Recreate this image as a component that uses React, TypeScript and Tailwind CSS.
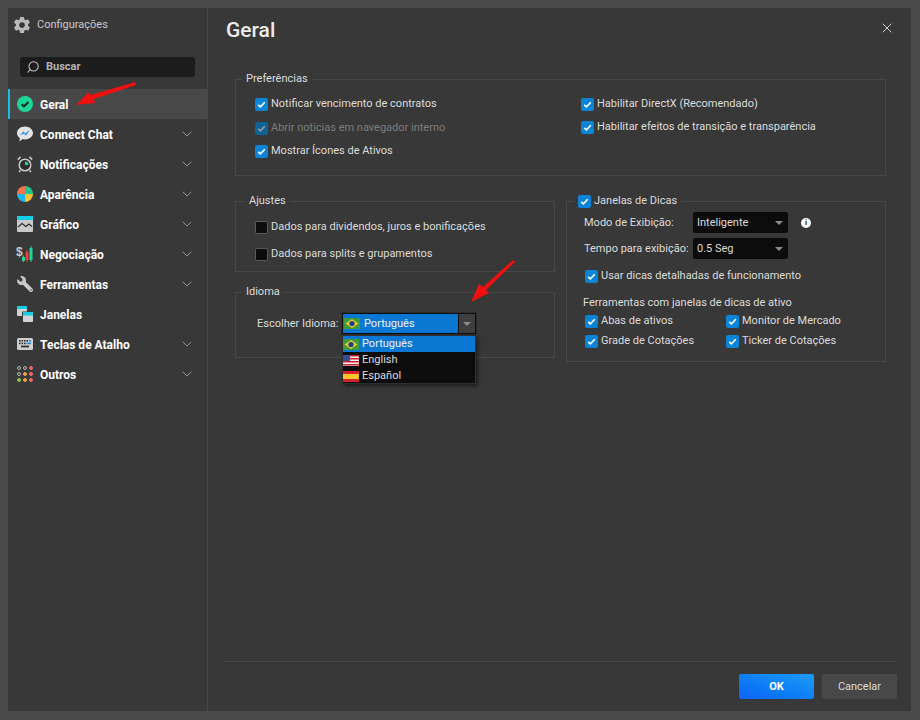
import { ReactNode } from 'react';
import { ChevronDown, X, Search } from 'lucide-react';
import { FaWrench } from 'react-icons/fa';
import { IoSettingsSharp } from 'react-icons/io5';

const FONT = "font-['Roboto','Noto_Sans',sans-serif]";

function Check({ checked = true, dim = false }: { checked?: boolean; dim?: boolean }) {
  if (!checked) {
    return <span className="w-[13px] h-[13px] shrink-0 rounded-[2px] bg-[#0c0c0c] border border-[#5a5a5a]" />;
  }
  return (
    <span className={`w-[13px] h-[13px] shrink-0 rounded-[2px] flex items-center justify-center ${dim ? 'bg-[#0f6296]' : 'bg-[#0a84d6]'}`}>
      <svg width="9" height="9" viewBox="0 0 9 9" fill="none">
        <path d="M1.2 4.8 L3.4 6.9 L7.8 2.2" stroke={dim ? '#9a9a9a' : '#fff'} strokeWidth="1.6" />
      </svg>
    </span>
  );
}

function CheckRow({ label, checked = true, dim = false }: { label: string; checked?: boolean; dim?: boolean }) {
  return (
    <div className="flex items-center gap-[3px] h-[14px]">
      <Check checked={checked} dim={dim} />
      <span className={`whitespace-nowrap ${dim ? 'text-[#7c7c7c]' : 'text-[#dcdcdc]'}`}>{label}</span>
    </div>
  );
}

function Group({ title, titleLeft = 'left-[6px]', className, children }: { title: ReactNode; titleLeft?: string; className: string; children: ReactNode }) {
  return (
    <div className={`relative border border-[#484848] ${className}`}>
      <div className={`absolute -top-[8px] ${titleLeft} px-1 bg-[#383838] h-[14px] flex items-center text-[#dcdcdc] whitespace-nowrap`}>{title}</div>
      {children}
    </div>
  );
}

function Select({ label, width = 'w-[95px]' }: { label: string; width?: string }) {
  return (
    <div className={`${width} h-[21px] bg-[#0c0c0c] rounded-[2px] flex items-center justify-between pl-[4px] pr-[5px] text-[#dcdcdc]`}>
      <span>{label}</span>
      <span className="w-0 h-0 border-x-[4px] border-x-transparent border-t-[4px] border-t-[#8c8c8c]" />
    </div>
  );
}

const BrazilFlag = () => (
  <svg width="16" height="11" viewBox="0 0 16 11" className="shrink-0">
    <rect width="16" height="11" fill="#3f9a3a" />
    <path d="M8 1 L14.5 5.5 L8 10 L1.5 5.5 Z" fill="#e8c92c" />
    <circle cx="8" cy="5.5" r="2.6" fill="#1d3f8f" />
  </svg>
);

const UsFlag = () => (
  <svg width="16" height="11" viewBox="0 0 16 11" className="shrink-0">
    <rect width="16" height="11" fill="#f2f2f2" />
    <rect y="0" width="16" height="1.5" fill="#c8202c" />
    <rect y="3" width="16" height="1.5" fill="#c8202c" />
    <rect y="6" width="16" height="1.5" fill="#c8202c" />
    <rect y="9" width="16" height="1.5" fill="#c8202c" />
    <rect width="7" height="6" fill="#3c4a9a" />
  </svg>
);

const SpainFlag = () => (
  <svg width="16" height="11" viewBox="0 0 16 11" className="shrink-0">
    <rect width="16" height="11" fill="#d4202a" />
    <rect y="3" width="16" height="5" fill="#f6c52c" />
  </svg>
);

const GeralIcon = () => (
  <svg width="16" height="16" viewBox="0 0 16 16">
    <circle cx="8" cy="8" r="8" fill="#1fd69a" />
    <path d="M4.6 8.2 L7 10.4 L11.4 6" stroke="#10231d" strokeWidth="1.9" fill="none" />
  </svg>
);

const ChatIcon = () => (
  <svg width="16" height="16" viewBox="0 0 16 16">
    <path d="M8 .5 C12.4.5 16 3.4 16 7 C16 10.6 12.4 13.4 8 13.4 C7.2 13.4 6.4 13.3 5.7 13.1 L2.6 15.4 L2.8 11.9 C1 10.7 0 9 0 7 C0 3.4 3.6.5 8 .5 Z" fill="#e4e4e4" />
    <path d="M2.8 9.6 L6.4 5.4 L8.2 7.6 L12.8 4 L9 9.4 L7 7.6 Z" fill="#1f8df0" />
  </svg>
);

const AlarmIcon = () => (
  <svg width="16" height="17" viewBox="0 0 16 17" fill="none">
    <circle cx="8" cy="9" r="5.8" stroke="#c9c9c9" strokeWidth="1.5" fill="#2c2c2c" />
    <path d="M8 9 V5.6 A3.4 3.4 0 0 1 11.4 9 Z" fill="#1fd69a" />
    <path d="M.8 3.6 L3.6 .9 M15.2 3.6 L12.4 .9 M3.4 14.2 L2 16 M12.6 14.2 L14 16" stroke="#c9c9c9" strokeWidth="1.5" />
  </svg>
);

const PaletteIcon = () => (
  <svg width="16" height="16" viewBox="0 0 16 16">
    <path d="M8 8 V0 A8 8 0 0 0 0 8 Z" fill="#f2734c" />
    <path d="M8 8 V0 A8 8 0 0 1 16 8 Z" fill="#1fc98e" />
    <path d="M8 8 H0 A8 8 0 0 0 8 16 Z" fill="#1fb6e6" />
    <path d="M8 8 H16 A8 8 0 0 1 8 16 Z" fill="#f5c033" />
  </svg>
);

const ChartIcon = () => (
  <svg width="16" height="16" viewBox="0 0 16 16">
    <rect width="16" height="16" rx="1" fill="#c9c9c9" />
    <path d="M1 0 H15 A1 1 0 0 1 16 1 V4 H0 V1 A1 1 0 0 1 1 0 Z" fill="#12cde6" />
    <path d="M1 11 L5 7.5 L9 10.5 L12 8 L15 10.5" stroke="#2c2c2c" strokeWidth="1.1" fill="none" />
  </svg>
);

const TradeIcon = () => (
  <svg width="17" height="16" viewBox="0 0 17 16">
    <text x="0" y="10" fontSize="12" fontWeight="700" fill="#c9c9c9" fontFamily="Liberation Sans, sans-serif">$</text>
    <rect x="6" y="11" width="3" height="4" fill="#1fd69a" />
    <path d="M7.5 9.5 V16" stroke="#1fd69a" />
    <rect x="9.5" y="6" width="3" height="8" fill="#ef3f3a" />
    <path d="M11 4 V16" stroke="#ef3f3a" />
    <rect x="13.5" y="2" width="3" height="12" fill="#1fd69a" />
    <path d="M15 0 V16" stroke="#1fd69a" />
  </svg>
);

const WindowsIcon = () => (
  <svg width="16" height="16" viewBox="0 0 16 16">
    <rect x="0" y="0" width="10" height="10" rx="1" fill="#d2d2d2" />
    <path d="M1 0 H9 A1 1 0 0 1 10 1 V3 H0 V1 A1 1 0 0 1 1 0 Z" fill="#12cde6" />
    <rect x="5" y="5.5" width="11" height="10.5" rx="1" fill="#383838" />
    <rect x="6" y="6" width="10" height="10" rx="1" fill="#d2d2d2" />
    <path d="M7 6 H15 A1 1 0 0 1 16 7 V9.4 H6 V7 A1 1 0 0 1 7 6 Z" fill="#12cde6" />
  </svg>
);

const KeyboardIcon = () => (
  <svg width="16" height="12" viewBox="0 0 16 12">
    <rect width="16" height="12" rx="1.5" fill="#cfcfcf" />
    {[2, 4.5, 7, 9.5].map(x => <rect key={x} x={x} y="2" width="1.6" height="1.6" fill="#333" />)}
    {[2, 4.5, 7].map(x => <rect key={x} x={x} y="4.6" width="1.6" height="1.6" fill="#333" />)}
    <rect x="12" y="2" width="2" height="1.6" fill="#2489e0" />
    <rect x="9.5" y="4.6" width="4.5" height="1.6" fill="#2489e0" />
    <rect x="4" y="7.6" width="8" height="1.8" fill="#333" />
  </svg>
);

const DotsIcon = () => {
  const dots = [
    ['#b5b5b5', '#b5b5b5', '#ef6a66'],
    ['#b5b5b5', '#f2a03c', '#ef6a66'],
    ['#8fc14a', '#f2a03c', '#ef6a66'],
  ];
  return (
    <svg width="16" height="16" viewBox="0 0 16 16" fill="none">
      {dots.map((row, y) =>
        row.map((c, x) =>
          <circle key={`${x}-${y}`} cx={2 + x * 6} cy={2 + y * 6} r="1.5" stroke={c} fill={c === '#b5b5b5' ? 'none' : c} />
        )
      )}
    </svg>
  );
};

const NAV = [
  { label: 'Geral', icon: <GeralIcon />, active: true },
  { label: 'Connect Chat', icon: <ChatIcon />, more: true },
  { label: 'Notificações', icon: <AlarmIcon />, more: true },
  { label: 'Aparência', icon: <PaletteIcon />, more: true },
  { label: 'Gráfico', icon: <ChartIcon />, more: true },
  { label: 'Negociação', icon: <TradeIcon />, more: true },
  { label: 'Ferramentas', icon: <FaWrench size={16} className="text-[#c9c9c9] -scale-x-100" />, more: true },
  { label: 'Janelas', icon: <WindowsIcon /> },
  { label: 'Teclas de Atalho', icon: <KeyboardIcon />, more: true },
  { label: 'Outros', icon: <DotsIcon />, more: true },
];

function Sidebar() {
  return (
    <aside className="w-[200px] shrink-0 flex flex-col border-r border-[#484848]">
      <div className="h-[49px] flex items-start gap-[6px] pl-[5px] pt-[8px]">
        <IoSettingsSharp size={18} className="text-[#b9b9b9]" />
        <span className="text-[#c8c8c8] text-[11px] leading-[18px]">Configurações</span>
      </div>
      <div className="mx-[12px] h-[20px] bg-[#1c1c1c] rounded-[3px] flex items-center gap-[6px] pl-[6px]">
        <Search size={14} strokeWidth={1.8} className="text-[#c4c4c4] -scale-x-100" />
        <span className="text-[#b4b4b4] font-bold">Buscar</span>
      </div>
      <nav className="mt-[12px] flex flex-col">
        {NAV.map(item => (
          <div
            key={item.label}
            className={`h-[30px] flex items-center border-l-2 pl-[6px] pr-[12px] ${item.active ? 'bg-[#484848] border-[#16c1dc]' : 'border-transparent'}`}
          >
            <span className="w-[17px] flex items-center justify-center shrink-0">{item.icon}</span>
            <span className="ml-[7px] flex-1 text-white font-bold text-[12px] pt-[1px]">{item.label}</span>
            {item.more && <ChevronDown size={16} strokeWidth={1.4} className="text-[#9a9a9a]" />}
          </div>
        ))}
      </nav>
    </aside>
  );
}

function Content() {
  return (
    <main className="flex-1 min-w-0 flex flex-col relative">
      <div className="h-[71px] flex items-start justify-between pl-[18px] pr-[16px] pt-[7px]">
        <h1 className="text-[21px] leading-[30px] font-medium text-[#ececec]">Geral</h1>
        <X size={16} strokeWidth={1.5} className="text-[#d0d0d0] mt-[5px]" />
      </div>

      <div className="ml-[27px] w-[651px] flex flex-col gap-[25px]">
        <Group title="Preferências" className="h-[97px]">
          <div className="grid grid-cols-[326px_1fr] pl-[19px] pt-[17px]">
            <div className="flex flex-col gap-[10px]">
              <CheckRow label="Notificar vencimento de contratos" />
              <CheckRow label="Abrir noticias em navegador interno" dim />
              <div className="-mt-[1px]"><CheckRow label="Mostrar Ícones de Ativos" /></div>
            </div>
            <div className="flex flex-col gap-[9px]">
              <CheckRow label="Habilitar DirectX (Recomendado)" />
              <CheckRow label="Habilitar efeitos de transição e transparência" />
            </div>
          </div>
        </Group>

        <div className="grid grid-cols-[320px_320px] gap-x-[11px] items-start">
          <div className="flex flex-col gap-[20px]">
            <Group title="Ajustes" titleLeft="left-[9px]" className="h-[71px]">
              <div className="flex flex-col gap-[13px] pl-[19px] pt-[18px]">
                <CheckRow label="Dados para dividendos, juros e bonificações" checked={false} />
                <CheckRow label="Dados para splits e grupamentos" checked={false} />
              </div>
            </Group>
            <Group title="Idioma" className="h-[66px]">
              <div className="flex items-center pl-[21px] pt-[20px]">
                <span className="w-[85px] shrink-0 whitespace-nowrap text-[#dcdcdc]">Escolher Idioma:</span>
                <div className="relative w-[134px] h-[21px] bg-[#0c0c0c] p-[1px] flex gap-[1px] shadow-[0_0_0_1px_#2e2e2e]">
                  <div className="flex-1 bg-[#0a78d2] flex items-center gap-[4px] pl-[1px] text-[#f0f0f0]">
                    <BrazilFlag />
                    <span>Português</span>
                  </div>
                  <div className="w-[16px] bg-[#3e3e3e] flex items-center justify-center">
                    <span className="w-0 h-0 border-x-[4px] border-x-transparent border-t-[4px] border-t-[#8c8c8c]" />
                  </div>
                  <div className="absolute left-0 top-[22px] w-[134px] h-[49px] bg-[#0c0c0c] border border-[#2e2e2e] shadow-[2px_2px_4px_rgba(0,0,0,0.5)] text-[#dcdcdc]">
                    <div className="h-[16px] bg-[#0a78d2] flex items-center gap-[3px] text-[#f0f0f0]"><BrazilFlag />Português</div>
                    <div className="h-[16px] flex items-center gap-[3px]"><UsFlag />English</div>
                    <div className="h-[16px] flex items-center gap-[3px]"><SpainFlag />Español</div>
                  </div>
                </div>
              </div>
            </Group>
          </div>

          <Group
            title={<span className="flex items-center gap-[3px]"><Check /><span>Janelas de Dicas</span></span>}
            titleLeft="left-[7px]"
            className="h-[161px]"
          >
            <div className="pl-[17px] pt-[10px] flex flex-col">
              <div className="grid grid-cols-[109px_95px_auto] items-center gap-y-[5px] text-[#dcdcdc]">
                <span className="whitespace-nowrap">Modo de Exibição:</span>
                <Select label="Inteligente" />
                <span className="ml-[13px] w-[10px] h-[10px] rounded-full bg-white text-[#222] text-[8px] leading-[10px] font-bold text-center">i</span>
                <span className="whitespace-nowrap">Tempo para exibição:</span>
                <Select label="0.5 Seg" />
              </div>
              <div className="mt-[10px] ml-[1px]"><CheckRow label="Usar dicas detalhadas de funcionamento" /></div>
              <div className="mt-[13px] -ml-[1px] text-[#dcdcdc] leading-[14px]">Ferramentas com janelas de dicas de ativo</div>
              <div className="mt-[4px] ml-[1px] grid grid-cols-[141px_auto] gap-y-[6px]">
                <CheckRow label="Abas de ativos" />
                <CheckRow label="Monitor de Mercado" />
                <CheckRow label="Grade de Cotações" />
                <CheckRow label="Ticker de Cotações" />
              </div>
            </div>
          </Group>
        </div>
      </div>

      <div className="mt-auto ml-[16px] mr-[14px] border-t border-[#484848] h-[50px] flex items-start justify-end gap-[8px] pt-[12px]">
        <button className="w-[75px] h-[25px] rounded-[2px] bg-gradient-to-tr from-[#0f62f5] to-[#1e9cf5] text-white font-bold">OK</button>
        <button className="w-[75px] h-[25px] rounded-[2px] bg-[#484848] text-[#dcdcdc]">Cancelar</button>
      </div>
    </main>
  );
}

export default function App() {
  return (
    <div className={`relative w-[920px] h-[720px] bg-[#4a4a4a] pl-[8px] pt-[8px] pr-[9px] pb-[9px] text-[11px] leading-[14px] ${FONT}`}>
      <div className="h-full flex bg-[#383838]">
        <Sidebar />
        <Content />
      </div>
      {/* red annotation arrows */}
      <svg className="absolute left-0 top-0 pointer-events-none" width="920" height="720" viewBox="0 0 920 720">
        <path d="M135 82 L136 85 L94 99 L95 103 L76 105 L89 92 L91 95 Z" fill="#f01010" />
        <path d="M513 260 L515 262 L486 290 L489 293 L471 302 L479 284 L483 287 Z" fill="#f01010" />
      </svg>
    </div>
  );
}
